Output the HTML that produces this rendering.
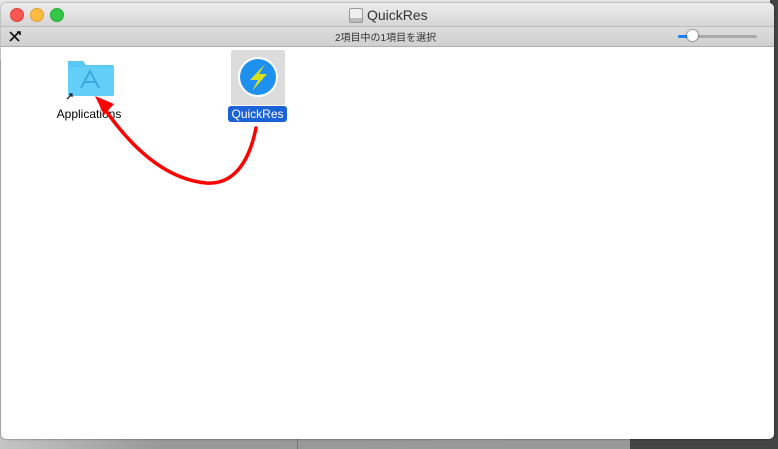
<!DOCTYPE html>
<html><head><style>
body{margin:0;width:778px;height:449px;overflow:hidden;position:relative;font-family:"Liberation Sans","Noto Sans CJK JP",sans-serif;background:linear-gradient(90deg,#c4c4c4,#9a9a9a 20%,#999 81%,#444 81%);}
.bgtop{position:absolute;left:0;top:0;width:778px;height:60px;background:#e8e8e8}
.bgright{position:absolute;left:770px;top:0;width:8px;height:449px;background:#444}
.vline{position:absolute;left:297px;top:439px;width:1px;height:10px;background:#777}
.win{position:absolute;left:1px;top:3px;width:773px;height:436px;background:#fff;border-radius:5px;overflow:hidden;box-shadow:0 0 2px rgba(0,0,0,.5)}
.title{position:absolute;left:0;top:0;width:100%;height:23px;background:linear-gradient(#ececec,#d6d6d6);border-bottom:1px solid #bdbdbd}
.tool{position:absolute;left:0;top:24px;width:100%;height:19px;background:linear-gradient(#dcdcdc,#d0d0d0);border-bottom:1px solid #b0b0b0;font-size:10px;color:#333}
.dot{position:absolute;top:5px;width:12px;height:12px;border-radius:50%}
</style></head><body>
<div class="bgtop"></div><div class="bgright"></div><div class="vline"></div>
<div class="win">
 <div class="title">
  <div class="dot" style="left:9px;background:#fc5753;border:0.5px solid #de3f3a"></div>
  <div class="dot" style="left:29px;background:#fdbc40;border:0.5px solid #de9f34"></div>
  <div class="dot" style="left:49px;background:#33c748;border:0.5px solid #27aa35"></div>
  <div style="position:absolute;left:348px;top:5px;width:12px;height:13px;border:1px solid #999;border-radius:2px;background:linear-gradient(#eee 70%,#bbb 70%)"></div>
  <div style="position:absolute;left:366px;top:4px;font-size:14px;color:#333">QuickRes</div>
 </div>
 <div class="tool">
  <svg style="position:absolute;left:8px;top:4px" width="12" height="11"><path d="M1 10 L10 1 M1 1 L10 10 M8 1 h3 v3" stroke="#111" stroke-width="1.6" fill="none"/></svg>
  <div style="position:absolute;left:334px;top:2px">2項目中の1項目を選択</div>
  <div style="position:absolute;left:677px;top:8px;width:79px;height:3px;background:#aaa;border-radius:2px"></div>
  <div style="position:absolute;left:677px;top:8px;width:12px;height:3px;background:#1a84ff;border-radius:2px"></div>
  <div style="position:absolute;left:686px;top:3px;width:11px;height:11px;border-radius:50%;background:#fff;box-shadow:0 0 1px 1px rgba(0,0,0,.3)"></div>
 </div>
 <svg style="position:absolute;left:0;top:0" width="773" height="436">
  <path d="M67 58 h15 l3 4 h26 a2 2 0 0 1 2 2 v27 a2 2 0 0 1 -2 2 h-42 a2 2 0 0 1 -2 -2 z" fill="#5ac8f5"/>
  <path d="M67 64 h46 v27 a2 2 0 0 1 -2 2 h-42 a2 2 0 0 1 -2 -2z" fill="#63cff8"/>
  <path d="M80 85 L89 68 L98 85 M83 79 H95" stroke="#3aa8dd" stroke-width="2" fill="none"/>
  <path d="M66 96 l5 -5 m-3 0 h3 v3" stroke="#222" stroke-width="1.3" fill="none"/>
  <rect x="230" y="47" width="54" height="55" rx="2" fill="#dcdcdc"/>
  <circle cx="257" cy="74" r="20" fill="#fff"/>
  <circle cx="257" cy="74" r="18" fill="#1e90f0"/>
  <path d="M264 61 L249 77 L257 77 L251 88 L266 71 L258 71 Z" fill="#d8e020"/>
  <rect x="227" y="103" width="59" height="16" rx="3" fill="#1a62d8"/>
  <text x="256.5" y="115" font-size="12" fill="#fff" text-anchor="middle" font-family="Liberation Sans">QuickRes</text>
  <text x="88" y="115" font-size="12" fill="#000" text-anchor="middle" font-family="Liberation Sans">Applications</text>
  <path d="M255 125 C248 160 232 182 205 180 C165 176 130 145 101 102" stroke="#f00" stroke-width="3.5" fill="none" stroke-linecap="round"/>
  <path d="M94 93 L113 101 L103 112 Z" fill="#f00"/>
 </svg>
</div>
</body></html>
